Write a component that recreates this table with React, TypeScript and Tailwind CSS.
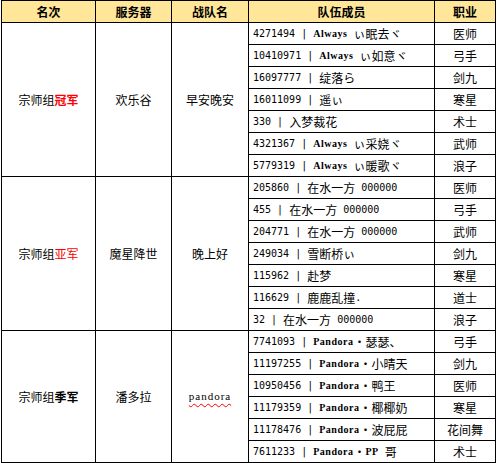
import { Fragment } from "react";

type Member = { text: string; job: string };
type Group = { place: string; mark: "gold" | "silver" | "bronze"; server: string; team: string; members: Member[] };

const groups: Group[] = [
  {
    place: "冠军",
    mark: "gold",
    server: "欢乐谷",
    team: "早安晚安",
    members: [
      { text: "4271494 | Always ぃ眠去ヾ", job: "医师" },
      { text: "10410971 | Always ぃ如意ヾ", job: "弓手" },
      { text: "16097777 | 绽落ら", job: "剑九" },
      { text: "16011099 | 遥ぃ", job: "寒星" },
      { text: "330 | 入梦裁花", job: "术士" },
      { text: "4321367 | Always ぃ采娆ヾ", job: "武师" },
      { text: "5779319 | Always ぃ暖歌ヾ", job: "浪子" },
    ],
  },
  {
    place: "亚军",
    mark: "silver",
    server: "魔星降世",
    team: "晚上好",
    members: [
      { text: "205860 | 在水一方 000000", job: "医师" },
      { text: "455 | 在水一方 000000", job: "弓手" },
      { text: "204771 | 在水一方 000000", job: "武师" },
      { text: "249034 | 雪断桥ぃ", job: "剑九" },
      { text: "115962 | 赴梦", job: "寒星" },
      { text: "116629 | 鹿鹿乱撞.", job: "道士" },
      { text: "32 | 在水一方 000000", job: "浪子" },
    ],
  },
  {
    place: "季军",
    mark: "bronze",
    server: "潘多拉",
    team: "pandora",
    members: [
      { text: "7741093 | Pandora・瑟瑟、", job: "弓手" },
      { text: "11197255 | Pandora・小晴天", job: "剑九" },
      { text: "10950456 | Pandora・鸭王", job: "医师" },
      { text: "11179359 | Pandora・椰椰奶", job: "寒星" },
      { text: "11178476 | Pandora・波屁屁", job: "花间舞" },
      { text: "7611233 | Pandora・PP 哥", job: "术士" },
    ],
  },
];

// split a name into latin / digit / cjk runs so the half-width bits keep a 6px pitch
function Mixed({ text }: { text: string }) {
  const parts = text.match(/[A-Za-z]+|[0-9 |.]+|[^A-Za-z0-9 |.]+/g) ?? [];
  return (
    <>
      {parts.map((p, i) =>
        /^[A-Za-z]+$/.test(p) ? (
          <span key={i} className="[font-family:'Liberation_Serif',serif] text-[10px] font-bold tracking-[0.5px] whitespace-pre">
            {p}
          </span>
        ) : /^[0-9 |.]+$/.test(p) ? (
          <span key={i} className="[font-family:'DejaVu_Sans_Mono',monospace] text-[10px] whitespace-pre">
            {p}
          </span>
        ) : (
          <span key={i}>{p}</span>
        )
      )}
    </>
  );
}

const spans = ["row-span-7", "row-span-7", "row-span-6"];

export default function App() {
  let row = 2;
  return (
    <div className="bg-white w-[501px] h-[463px] overflow-hidden [font-family:'Noto_Sans_CJK_SC',sans-serif] text-[12px] text-black leading-none">
      <div className="ml-px grid w-fit grid-cols-[93px_75px_76px_185px_60px] grid-rows-[21px] auto-rows-[21px] gap-px bg-black p-px">
        {["名次", "服务器", "战队名", "队伍成员", "职业"].map((h) => (
          <div key={h} className="flex items-center justify-center bg-[#ffe699] font-bold">
            {h}
          </div>
        ))}
        {groups.map((g, gi) => (
          <Fragment key={g.place}>
            <div className={`${spans[gi]} flex items-center justify-center bg-white`}>
              宗师组
              <span
                className={
                  g.mark === "gold"
                    ? "font-bold text-[#ff0000]"
                    : g.mark === "silver"
                    ? "text-[#ff0000]"
                    : "font-bold"
                }
              >
                {g.place}
              </span>
            </div>
            <div className={`${spans[gi]} flex items-center justify-center bg-white`}>{g.server}</div>
            <div className={`${spans[gi]} flex items-center justify-center bg-white`}>
              {g.team === "pandora" ? (
                <span className="[font-family:'Liberation_Serif',serif] text-[11px] tracking-[1px] underline decoration-wavy decoration-[#ff0000] decoration-1 underline-offset-[3px]">
                  pandora
                </span>
              ) : (
                g.team
              )}
            </div>
            {g.members.map((m, mi) => {
              const r = row++;
              return (
                <Fragment key={mi}>
                  <div className="flex items-center bg-white pl-1" style={{ gridColumn: 4, gridRow: r }}>
                    <Mixed text={m.text} />
                  </div>
                  <div className="flex items-center justify-center bg-white" style={{ gridColumn: 5, gridRow: r }}>
                    {m.job}
                  </div>
                </Fragment>
              );
            })}
          </Fragment>
        ))}
      </div>
    </div>
  );
}
